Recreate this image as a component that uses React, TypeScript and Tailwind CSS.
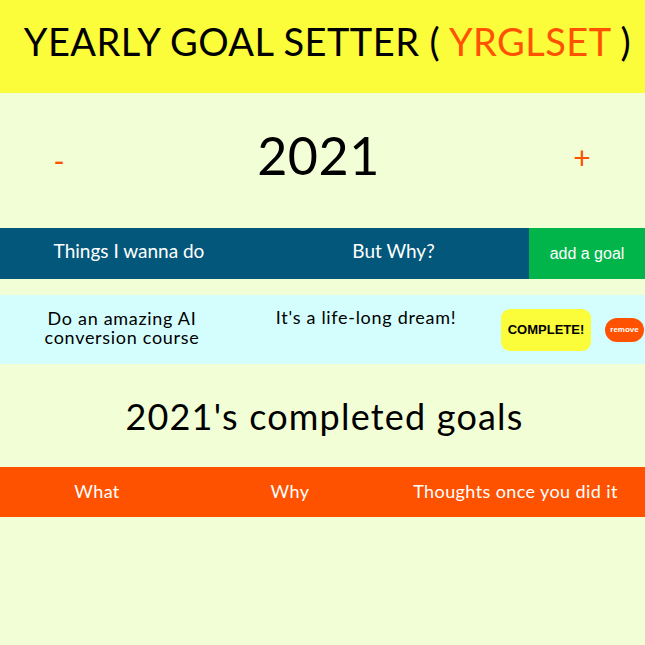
import React from "react";

export default function App() {
  const font = { fontFamily: "Lato, 'Noto Sans', sans-serif" };
  const arial = { fontFamily: "'Liberation Sans', Arial, sans-serif" };
  return (
    <div className="min-h-[645px] w-[645px] bg-[#f2fed6] text-black" style={font}>
      <header className="h-[93px] bg-[#fbfc3a] flex items-center justify-center pl-[10px] pb-[11px]">
        <h1 className="text-[38px] leading-none tracking-[0.45px] whitespace-nowrap">
          YEARLY GOAL SETTER ( <span className="text-[#fe5200]">YRGLSET</span> )
        </h1>
      </header>

      <section className="h-[135px] grid grid-cols-[118px_401px_126px] items-center">
        <button className="text-[#fe5200] text-[30px] leading-none justify-self-center mb-[2px]">-</button>
        <div className="text-[52px] leading-none text-center mb-[12px] tracking-[0.5px]">2021</div>
        <button className="text-[#fe5200] text-[30px] leading-none justify-self-center mb-[8px]">+</button>
      </section>

      <div className="h-[51px] bg-[#03577a] grid grid-cols-[258px_271px_116px] items-center text-white text-[19px]">
        <div className="text-center pb-[4px]">Things I wanna do</div>
        <div className="text-center pb-[4px]">But Why?</div>
        <button className="h-full bg-[#01b54a] text-white text-[16px]" style={arial}>
          add a goal
        </button>
      </div>

      <div className="mt-[16px] h-[69px] bg-[#d4fefe] grid grid-cols-[244px_244px_1fr] items-start">
        <div className="pt-[14px] px-[30px] text-center text-[18px] leading-[19px] tracking-[0.7px]">
          Do an amazing AI conversion course
        </div>
        <div className="pt-[13px] text-center text-[18px] leading-[19px] tracking-[0.7px]">It's a life-long dream!</div>
        <div className="h-full flex items-center gap-[14px] pl-[13px]">
          <button className="w-[90px] h-[42px] rounded-[9px] bg-[#fbfc3a] text-[13px] font-bold" style={arial}>
            COMPLETE!
          </button>
          <button className="w-[39px] h-[24px] rounded-full bg-[#fe5200] text-white text-[8px] font-bold" style={arial}>
            remove
          </button>
        </div>
      </div>

      <h2 className="h-[103px] flex items-center justify-center text-[36px] leading-none tracking-[1.2px] pl-[4px]">
        2021's completed goals
      </h2>

      <div className="h-[50px] bg-[#fe5200] grid grid-cols-[194px_192px_259px] items-center text-white text-[18px] tracking-[0.4px]">
        <div className="text-center pb-[2px]">What</div>
        <div className="text-center pb-[2px]">Why</div>
        <div className="text-center pb-[2px]">Thoughts once you did it</div>
      </div>
    </div>
  );
}
